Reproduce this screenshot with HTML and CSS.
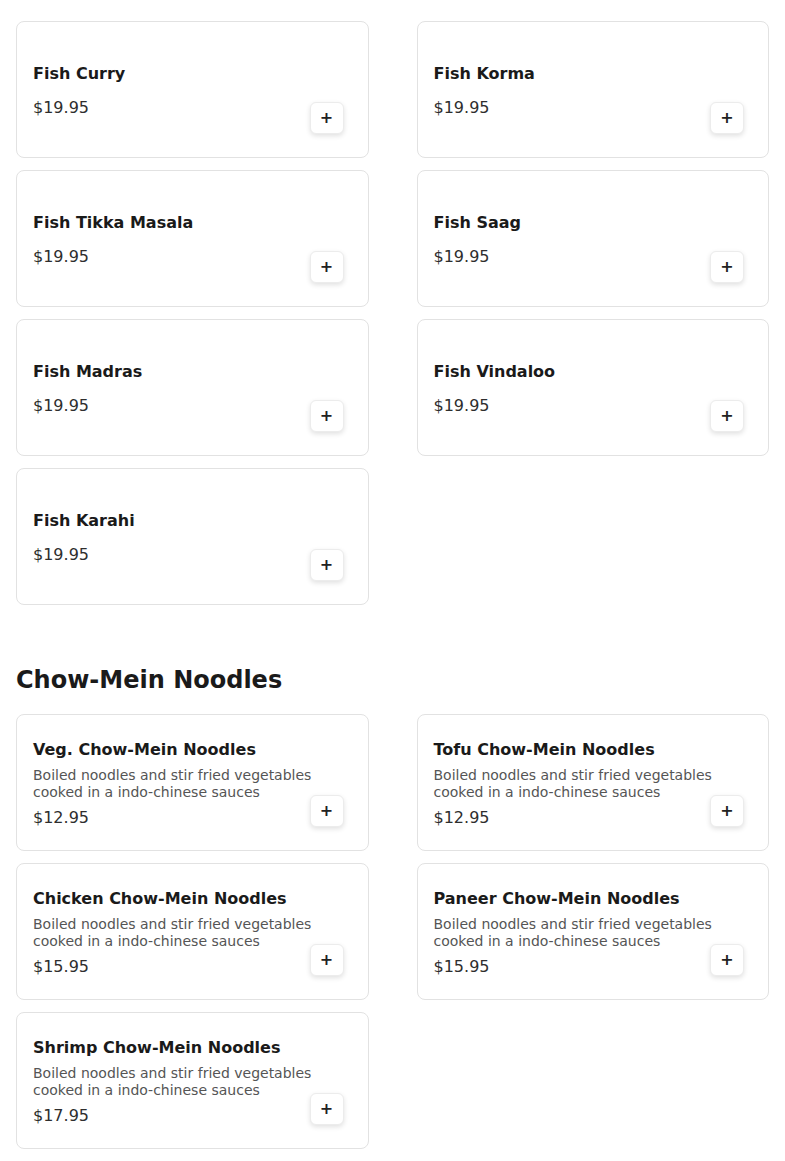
FILE: index.html
```html
<!DOCTYPE html>
<html lang="en">
<head>
<meta charset="utf-8">
<title>Menu</title>
<link rel="stylesheet" href="styles.css">
</head>
<body>
<main class="menu">
  <section class="section first">
    <div class="grid">
      <div class="card"><div class="info plain"><h3 class="name">Fish Curry</h3><div class="price">$19.95</div></div><button class="add">+</button></div>
      <div class="card"><div class="info plain"><h3 class="name">Fish Korma</h3><div class="price">$19.95</div></div><button class="add">+</button></div>
      <div class="card"><div class="info plain"><h3 class="name">Fish Tikka Masala</h3><div class="price">$19.95</div></div><button class="add">+</button></div>
      <div class="card"><div class="info plain"><h3 class="name">Fish Saag</h3><div class="price">$19.95</div></div><button class="add">+</button></div>
      <div class="card"><div class="info plain"><h3 class="name">Fish Madras</h3><div class="price">$19.95</div></div><button class="add">+</button></div>
      <div class="card"><div class="info plain"><h3 class="name">Fish Vindaloo</h3><div class="price">$19.95</div></div><button class="add">+</button></div>
      <div class="card"><div class="info plain"><h3 class="name">Fish Karahi</h3><div class="price">$19.95</div></div><button class="add">+</button></div>
    </div>
  </section>
  <section class="section">
    <h2 class="section-title">Chow-Mein Noodles</h2>
    <div class="grid">
      <div class="card"><div class="info"><h3 class="name">Veg. Chow-Mein Noodles</h3><p class="desc">Boiled noodles and stir fried vegetables cooked in a indo-chinese sauces</p><div class="price">$12.95</div></div><button class="add">+</button></div>
      <div class="card"><div class="info"><h3 class="name">Tofu Chow-Mein Noodles</h3><p class="desc">Boiled noodles and stir fried vegetables cooked in a indo-chinese sauces</p><div class="price">$12.95</div></div><button class="add">+</button></div>
      <div class="card"><div class="info"><h3 class="name">Chicken Chow-Mein Noodles</h3><p class="desc">Boiled noodles and stir fried vegetables cooked in a indo-chinese sauces</p><div class="price">$15.95</div></div><button class="add">+</button></div>
      <div class="card"><div class="info"><h3 class="name">Paneer Chow-Mein Noodles</h3><p class="desc">Boiled noodles and stir fried vegetables cooked in a indo-chinese sauces</p><div class="price">$15.95</div></div><button class="add">+</button></div>
      <div class="card"><div class="info"><h3 class="name">Shrimp Chow-Mein Noodles</h3><p class="desc">Boiled noodles and stir fried vegetables cooked in a indo-chinese sauces</p><div class="price">$17.95</div></div><button class="add">+</button></div>
    </div>
  </section>
</main>
</body>
</html>
```
FILE: styles.css
```css
* { box-sizing: border-box; }
html, body { margin: 0; padding: 0; background: #fff; }
body {
  font-family: "DejaVu Sans", sans-serif;
  color: #1a1a1a;
}
.menu { padding: 21px 16px 0; }
.section { margin-bottom: 59px; }
.section-title {
  margin: 0 0 18px;
  font-size: 24px;
  line-height: 32px;
  font-weight: 700;
  color: #1a1a1a;
}
.grid {
  display: grid;
  grid-template-columns: 1fr 1fr;
  column-gap: 48px;
  row-gap: 12px;
}
.card {
  position: relative;
  display: flex;
  align-items: center;
  height: 137px;
  padding: 17px 16px 15px;
  border: 1px solid #e2e2e2;
  border-radius: 8px;
  background: #fff;
}
.info {
  flex: 1;
  min-width: 0;
}
.name {
  margin: 0 0 5px;
  font-size: 16px;
  line-height: 24px;
  font-weight: 700;
  color: #1a1a1a;
}
.desc {
  margin: 0;
  font-size: 14px;
  line-height: 17px;
  color: #555;
  max-width: 290px;
}
.price {
  margin-top: 5px;
  font-size: 16px;
  line-height: 24px;
  color: #2e2e2e;
}
.plain .price { margin-top: 10px; }
.add {
  position: absolute;
  right: 24px;
  bottom: 23px;
  width: 34px;
  height: 32px;
  padding: 0;
  border: 1px solid #ececec;
  border-radius: 6px;
  background: #fff;
  box-shadow: 0 2px 5px rgba(0,0,0,0.12);
  font-family: "DejaVu Sans", sans-serif;
  font-size: 16px;
  font-weight: 700;
  line-height: 1;
  color: #222;
}
```
